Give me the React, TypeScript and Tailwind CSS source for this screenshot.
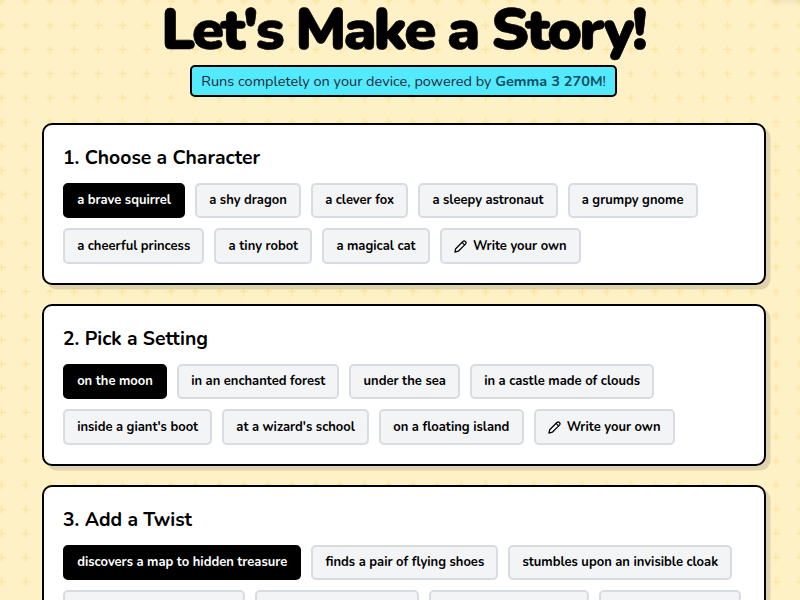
import { ReactNode } from "react";

type Step = { title: string; options: string[]; custom?: boolean };

const steps: Step[] = [
    {
        title: "1. Choose a Character",
        options: [
            "a brave squirrel",
            "a shy dragon",
            "a clever fox",
            "a sleepy astronaut",
            "a grumpy gnome",
            "a cheerful princess",
            "a tiny robot",
            "a magical cat",
        ],
        custom: true,
    },
    {
        title: "2. Pick a Setting",
        options: [
            "on the moon",
            "in an enchanted forest",
            "under the sea",
            "in a castle made of clouds",
            "inside a giant's boot",
            "at a wizard's school",
            "on a floating island",
        ],
        custom: true,
    },
    {
        title: "3. Add a Twist",
        options: [
            "discovers a map to hidden treasure",
            "finds a pair of flying shoes",
            "stumbles upon an invisible cloak",
        ],
    },
];

function PencilIcon() {
    return (
        <svg className="mr-[6px] h-[13px] w-[13px] shrink-0" viewBox="0 0 13 13" fill="none" stroke="currentColor" strokeWidth="1.25" strokeLinecap="round" strokeLinejoin="round">
            <path d="M0.9 12.1 L1.7 8.7 L8.9 1.5 C10.6 0 13 2.3 11.5 4.1 L4.3 11.2 Z M8.1 2.4 L10.6 4.9" />
        </svg>
    );
}

function Chip({ selected, children }: { selected?: boolean; children: ReactNode }) {
    const color = selected ? "border-black bg-black text-white" : "border-[#d8dbe0] bg-gray-100 text-black";

    return (
        <button className={`flex h-[35.4px] items-center whitespace-nowrap rounded-[5px] border-2 px-[12.15px] pt-[1.2px] text-[12.97px] font-bold ${color}`}>
            {children}
        </button>
    );
}

function PlusPattern() {
    return (
        <svg className="absolute inset-0 h-full w-full" aria-hidden="true">
            <defs>
                <pattern id="plus" width="24.2" height="24.2" patternUnits="userSpaceOnUse" x="-10.5" y="-11">
                    <path d="M8.2 12.1h7.8M12.1 8.2v7.8" stroke="#fae6a2" strokeWidth="1.6" />
                </pattern>
            </defs>
            <rect width="100%" height="100%" fill="url(#plus)" />
        </svg>
    );
}

export default function App() {
    return (
        <div className="relative h-[600px] w-[800px] overflow-hidden bg-[#fef1c5] font-[Nunito,sans-serif]">
            <PlusPattern />
            <div className="absolute -top-5 -right-5 h-5 w-[50px] shadow-[0_1px_8px_rgba(0,0,0,0.08)]" />
            <div className="relative flex flex-col items-center">
                <h1 className="h-[65px] pl-[6px] text-[58px] leading-[60px] font-black tracking-[-0.049em] whitespace-nowrap text-black [-webkit-text-stroke:0.6px_black]">
                    Let's Make a Story!
                </h1>
                <p className="ml-[7px] flex h-[32px] w-[427px] items-center justify-center rounded-[5px] border-2 border-black bg-[#53eafd] pt-[2px] text-[14.52px] whitespace-pre text-gray-800">
                    Runs completely on your device, powered by <span className="font-bold text-[#104e64]">Gemma 3 270M</span>!
                </p>
                <div className="mt-[26px] ml-[8px] flex w-[724px] flex-col gap-[19px]">
                    {steps.map((step) => (
                        <section key={step.title} className="h-[162px] rounded-[10px] border-2 border-black bg-white px-[19px] shadow-[4.5px_4.5px_0_rgba(0,0,0,0.12)]">
                            <h2 className="mt-[18px] h-[39.8px] text-[19.35px] leading-[29px] font-bold text-black">{step.title}</h2>
                            <div className="flex flex-wrap gap-[10px]">
                                {step.options.map((option, i) => (
                                    <Chip key={option} selected={i === 0}>{option}</Chip>
                                ))}
                                {step.custom ? (
                                    <Chip><PencilIcon />Write your own</Chip>
                                ) : (
                                    <>
                                        <div className="h-[35.4px] w-[182px] rounded-[5px] border-2 border-[#d8dbe0] bg-gray-100" />
                                        <div className="h-[35.4px] w-[164px] rounded-[5px] border-2 border-[#d8dbe0] bg-gray-100" />
                                        <div className="h-[35.4px] w-[160px] rounded-[5px] border-2 border-[#d8dbe0] bg-gray-100" />
                                        <div className="h-[35.4px] w-[142px] rounded-[5px] border-2 border-[#d8dbe0] bg-gray-100" />
                                    </>
                                )}
                            </div>
                        </section>
                    ))}
                </div>
            </div>
        </div>
    );
}
